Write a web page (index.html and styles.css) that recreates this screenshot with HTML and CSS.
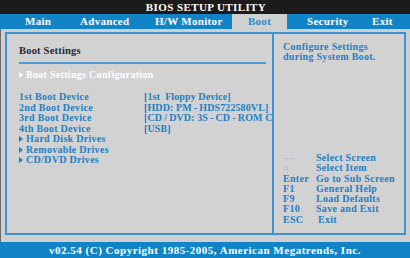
FILE: index.html
```html
<!DOCTYPE html>
<html>
<head>
<meta charset="utf-8">
<link rel="stylesheet" href="styles.css">
</head>
<body>
<div class="screen">
  <div class="titlebar">BIOS SETUP UTILITY</div>
  <div class="menubar">
    <div class="tab tab-main">Main</div>
    <div class="tab tab-adv">Advanced</div>
    <div class="tab tab-hw">H/W Monitor</div>
    <div class="tab tab-boot">Boot</div>
    <div class="tab tab-sec">Security</div>
    <div class="tab tab-exit">Exit</div>
  </div>
  <div class="body">
    <div class="frame">
      <div class="left">
        <div class="heading">Boot Settings</div>
        <div class="config"><span class="tri tri-white"></span>Boot Settings Configuration</div>
        <div class="rows">
          <div class="row"><span class="label">1st Boot Device</span><span class="value">[1st&nbsp; Floppy Device]</span></div>
          <div class="row"><span class="label">2nd Boot Device</span><span class="value">[HDD: PM&thinsp;-&thinsp;HDS722580VL]</span></div>
          <div class="row"><span class="label">3rd Boot Device</span><span class="value">[CD&thinsp;/&thinsp;DVD: 3S&thinsp;-&thinsp;CD&thinsp;-&thinsp;ROM C]</span></div>
          <div class="row"><span class="label">4th Boot Device</span><span class="value">[USB]</span></div>
          <div class="row"><span class="label"><span class="tri"></span>Hard Disk Drives</span></div>
          <div class="row"><span class="label"><span class="tri"></span>Removable Drives</span></div>
          <div class="row"><span class="label"><span class="tri"></span>CD/DVD Drives</span></div>
        </div>
      </div>
      <div class="right">
        <div class="help">Configure Settings<br>during System Boot.</div>
        <div class="keys">
          <div class="key"><span class="k k-arrow">&larr;&rarr;</span><span class="d">Select Screen</span></div>
          <div class="key"><span class="k k-arrow">&uarr;&darr;</span><span class="d">Select Item</span></div>
          <div class="key"><span class="k">Enter</span><span class="d">Go to Sub Screen</span></div>
          <div class="key"><span class="k">F1</span><span class="d">General Help</span></div>
          <div class="key"><span class="k">F9</span><span class="d">Load Defaults</span></div>
          <div class="key"><span class="k">F10</span><span class="d">Save and Exit</span></div>
          <div class="key"><span class="k">ESC</span><span class="d d-esc">Exit</span></div>
        </div>
      </div>
    </div>
  </div>
  <div class="footer">v02.54 (C) Copyright 1985-2005, American Megatrends, Inc.</div>
</div>
</body>
</html>
```

FILE: styles.css
```css
html, body {
  margin: 0;
  padding: 0;
}
body {
  width: 410px;
  height: 258px;
  overflow: hidden;
  background: #cfcfcf;
  font-family: "Liberation Serif", "Times New Roman", serif;
  font-weight: bold;
}
.screen {
  width: 410px;
  height: 258px;
  display: flex;
  flex-direction: column;
}
.titlebar {
  height: 14px;
  background: #1c1a1b;
  color: #ffffff;
  font-size: 11px;
  line-height: 15px;
  text-align: center;
  letter-spacing: 0.4px;
  padding-left: 2px;
}
.menubar {
  height: 15px;
  background: #1184c8;
  display: flex;
  color: #ffffff;
  font-size: 11px;
  line-height: 15px;
  letter-spacing: 0.3px;
}
.tab { box-sizing: border-box; white-space: nowrap; }
.tab-main { width: 73px; padding-left: 25px; }
.tab-adv { width: 75px; padding-left: 7px; }
.tab-hw { width: 84px; padding-left: 7px; }
.tab-boot { width: 55px; text-align: center; background: #cfd0d0; color: #2b8ac8; }
.tab-sec { width: 65px; padding-left: 20px; }
.tab-exit { flex: 1; padding-left: 20px; }

.body {
  flex: 1;
  padding: 3px 4px 7px 4px;
  border-left: 1px solid #6c6c6c;
  display: flex;
}
.frame {
  flex: 1;
  border: 2px solid #3b93d3;
  display: flex;
  background: #d2d2d2;
}
.left {
  width: 267px;
  flex-shrink: 0;
  overflow: hidden;
  border-right: 2px solid #3b93d3;
  padding: 10px 0 0 12px;
  box-sizing: border-box;
}
.heading {
  font-size: 10.5px;
  color: #1f2a35;
  line-height: 14px;
  padding-bottom: 4px;
  border-bottom: 2px solid #4e9bd4;
  width: 247px;
  letter-spacing: 0.2px;
}
.config {
  color: #ffffff;
  font-size: 10px;
  line-height: 12px;
  margin-top: 5px;
  letter-spacing: 0.3px;
  display: flex;
  align-items: center;
}
.tri {
  display: inline-block;
  width: 0;
  height: 0;
  border-top: 3.5px solid transparent;
  border-bottom: 3.5px solid transparent;
  border-left: 4px solid #1e7fc0;
  margin-right: 3px;
  vertical-align: 0px;
}
.tri-white { border-left-color: #ffffff; }
.rows {
  margin-top: 11px;
}
.row {
  display: flex;
  height: 10.5px;
  line-height: 10.5px;
  font-size: 10px;
  color: #1e80c4;
  letter-spacing: 0.3px;
  white-space: nowrap;
}
.label { width: 125px; flex-shrink: 0; }
.value { flex-shrink: 0; letter-spacing: 0.1px; }
.right {
  flex: 1;
  padding: 8px 0 0 9px;
  color: #1e80c4;
  font-size: 10px;
  letter-spacing: 0.3px;
}
.help {
  line-height: 10px;
}
.keys {
  margin-top: 91px;
}
.key {
  display: flex;
  height: 10.3px;
  line-height: 10.3px;
  white-space: nowrap;
}
.k { width: 33px; }
.k-arrow { font-size: 7px; color: #6a9cc4; letter-spacing: -1px; }
.d-esc { padding-left: 2px; }
.footer {
  height: 16px;
  background: #1184c8;
  color: #ffffff;
  font-size: 11px;
  line-height: 16px;
  text-align: center;
  letter-spacing: 0.5px;
}
```
